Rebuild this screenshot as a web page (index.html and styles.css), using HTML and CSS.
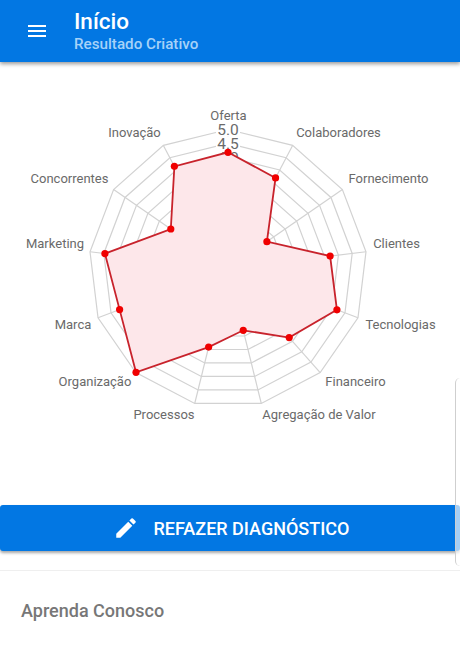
FILE: index.html
```html
<!DOCTYPE html>
<html lang="pt-BR">
<head>
    <meta charset="UTF-8">
    <meta name="viewport" content="width=device-width, initial-scale=1.0">
    <title>Início</title>
    <link rel="stylesheet" href="styles.css">
</head>
<body>
    <header class="app-bar">
        <button class="menu-btn" aria-label="Menu">
            <svg viewBox="0 0 24 24" width="24" height="24"><path d="M3 18h18v-2H3v2zm0-5h18v-2H3v2zm0-7v2h18V6H3z"/></svg>
        </button>
        <div class="app-bar-titles">
            <div class="app-bar-title">Início</div>
            <div class="app-bar-sub">Resultado Criativo</div>
        </div>
    </header>

    <main class="chart-wrap">
        <svg id="radar" class="radar" viewBox="0 0 460 443" width="460" height="443"></svg>
    </main>

    <button class="redo-btn">
        <svg viewBox="0 0 24 24" width="26" height="26"><path d="M3 17.25V21h3.75L17.81 9.94l-3.75-3.75L3 17.25zM20.71 7.04a1 1 0 0 0 0-1.41l-2.34-2.34a1 1 0 0 0-1.41 0l-1.83 1.83 3.75 3.75 1.83-1.83z"/></svg>
        <span>REFAZER DIAGNÓSTICO</span>
    </button>

    <section class="learn">
        <h2 class="learn-title">Aprenda Conosco</h2>
    </section>

    <div class="drawer-handle"></div>

    <script src="script.js"></script>
</body>
</html>
```

FILE: styles.css
```css
* {
    box-sizing: border-box;
}

html, body {
    height: 100%;
}

body {
    margin: 0;
    overflow: hidden;
    position: relative;
    background: #fff;
    font-family: Roboto, "Liberation Sans", sans-serif;
}

.app-bar {
    display: flex;
    align-items: center;
    height: 62px;
    padding-left: 25px;
    background: #0277e3;
    box-shadow: 0 2px 4px rgba(0, 0, 0, .4);
    color: #fff;
    position: relative;
}

.menu-btn {
    display: flex;
    width: 24px;
    height: 24px;
    margin-right: 25px;
    padding: 0;
    border: 0;
    background: none;
    fill: #fff;
}

.app-bar-title {
    margin-top: -1px;
    font-size: 22.5px;
    font-weight: 500;
    line-height: 26px;
}

.app-bar-sub {
    margin-top: 2px;
    font-size: 15.2px;
    font-weight: 500;
    line-height: 17px;
    color: #a6d2f8;
}

.chart-wrap {
    height: 443px;
}

.radar {
    display: block;
}

.ring {
    fill: none;
    stroke: #d2d2d2;
    stroke-width: 1.2;
}

.spoke {
    stroke: #d2d2d2;
    stroke-width: 1.2;
}

.tick-bg {
    fill: #fff;
}

.tick {
    font-size: 15.5px;
    fill: #6a6a6a;
    text-anchor: middle;
}

.axis-label {
    font-size: 13px;
    fill: #6a6a6a;
    text-anchor: middle;
}

.data-area {
    fill: #fde7ea;
    stroke: #c8232c;
    stroke-width: 1.8;
}

.data-dot {
    fill: #f00000;
}

.redo-btn {
    display: flex;
    align-items: center;
    justify-content: center;
    width: 100%;
    height: 46px;
    padding: 0 0 0 2px;
    border: 0;
    border-radius: 3px;
    background: #0277e3;
    box-shadow: 0 2px 3px rgba(0, 0, 0, .35);
    color: #fff;
    fill: #fff;
    font-family: inherit;
    font-size: 18px;
    font-weight: 500;
}

.redo-btn svg {
    margin-right: 15px;
}

.learn {
    margin-top: 19px;
    padding: 30px 21px 0;
    border-top: 1px solid #efefef;
}

.learn-title {
    margin: 0;
    font-size: 18px;
    font-weight: 500;
    line-height: 20px;
    color: #777;
}

.drawer-handle {
    position: absolute;
    top: 378px;
    right: 0;
    width: 5px;
    height: 188px;
    border-left: 1px solid #cfcfcf;
    border-radius: 8px 0 0 8px;
    background: rgba(255, 255, 255, .65);
}
```

FILE: script.js
```js
var NS = "http://www.w3.org/2000/svg";
var svg = document.getElementById("radar");

// chart center and outer radius, svg starts below the app bar
var cx = 228;
var cy = 206.5;
var radius = 139;
var max = 5;

// name, value, label x, label y (center of the text)
var axes = [
    ["Oferta", 228.5, 53.2],
    ["Colaboradores", 338.5, 70.2],
    ["Fornecimento", 388.5, 116.2],
    ["Clientes", 396.5, 181.2],
    ["Tecnologias", 400.5, 262.2],
    ["Financeiro", 355.5, 319.2],
    ["Agregação de Valor", 319, 352.2],
    ["Processos", 164, 352.2],
    ["Organização", 95, 319.2],
    ["Marca", 73, 262.2],
    ["Marketing", 55, 181.2],
    ["Concorrentes", 69.5, 116.2],
    ["Inovação", 134.5, 70.2]
];

var values = [4.18, 3.68, 1.70, 3.70, 4.19, 3.32, 2.29, 2.91, 4.99, 4.17, 4.46, 2.50, 4.15];

function add(tag, attrs, text) {
    var el = document.createElementNS(NS, tag);
    for (var key in attrs) {
        el.setAttribute(key, attrs[key]);
    }
    if (text) el.textContent = text;
    svg.appendChild(el);
    return el;
}

function point(i, value) {
    var a = i * 2 * Math.PI / axes.length;
    var r = value / max * radius;
    return [cx + r * Math.sin(a), cy - r * Math.cos(a)];
}

function polygonPoints(valueAt) {
    var list = [];
    for (var i = 0; i < axes.length; i++) {
        list.push(point(i, valueAt(i)).join(","));
    }
    return list.join(" ");
}

for (var v = 0.5; v <= max; v += 0.5) {
    add("polygon", { "class": "ring", points: polygonPoints(function () { return v; }) });
}

for (var i = 0; i < axes.length; i++) {
    var end = point(i, max);
    add("line", { "class": "spoke", x1: cx, y1: cy, x2: end[0], y2: end[1] });
}

// tick labels sit on a white backdrop, lower ones would be under the data area
for (var t = 4; t <= max; t += 0.5) {
    var y = cy - t / max * radius;
    add("rect", { "class": "tick-bg", x: cx - 12, y: y - 7, width: 24, height: 14 });
    add("text", { "class": "tick", x: cx, y: y + 5.5 }, t.toFixed(1));
}

add("polygon", { "class": "data-area", points: polygonPoints(function (n) { return values[n]; }) });

axes.forEach(function (axis, n) {
    var p = point(n, values[n]);
    add("circle", { "class": "data-dot", cx: p[0], cy: p[1], r: 3.6 });
    add("text", { "class": "axis-label", x: axis[1], y: axis[2] + 4.5 }, axis[0]);
});
```
